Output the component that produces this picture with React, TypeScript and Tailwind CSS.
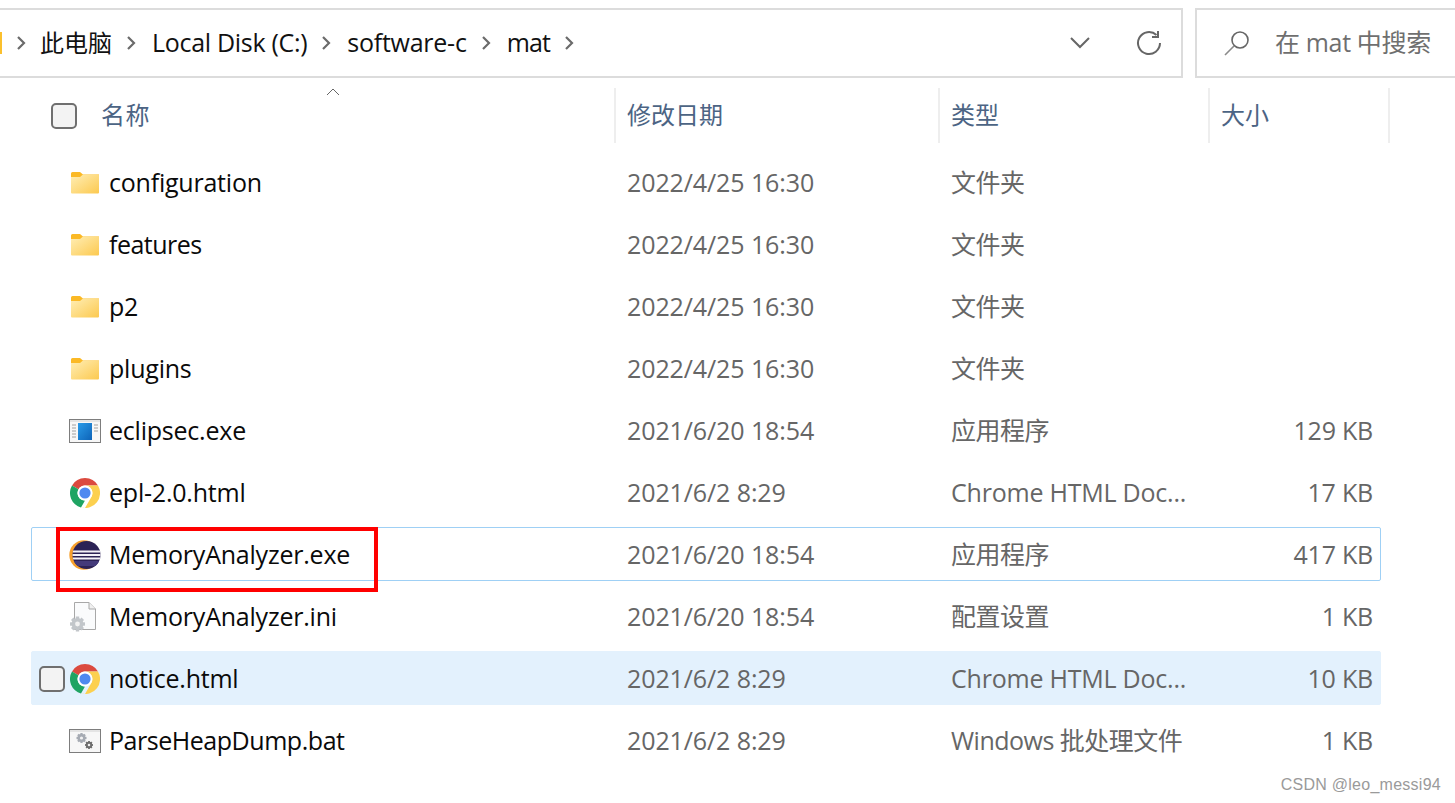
import React from "react";

const font = { fontFamily: '"Open Sans", "Noto Sans CJK SC", sans-serif' };

function Folder() {
  return (
    <svg width="30" height="24" viewBox="0 0 30 24">
      <defs>
        <linearGradient id="fg" x1="0" y1="0" x2="1" y2="1">
          <stop offset="0" stopColor="#ffeeb5" />
          <stop offset="1" stopColor="#fcc94f" />
        </linearGradient>
      </defs>
      <path d="M1 2.5 Q1 1 2.5 1 H10 L13 3.5 H29 V6 H1 Z" fill="#fbb925" />
      <path d="M1 6 L10 6 L13 3.5 H28 Q29 3.5 29 4.5 V21.5 Q29 22.5 28 22.5 H2 Q1 22.5 1 21.5 Z" fill="url(#fg)" />
    </svg>
  );
}

function Chrome() {
  return (
    <svg width="30" height="30" viewBox="0 0 30 30">
      <path d="M15 0 A15 15 0 0 1 28 7.5 L15 7.5 A7.5 7.5 0 0 0 8.5 11.2 L2 7.5 A15 15 0 0 1 15 0 Z" fill="#db4a3f" />
      <path d="M2 7.5 L8.5 11.2 A7.5 7.5 0 0 0 15 22.5 L11 29.5 A15 15 0 0 1 2 7.5 Z" fill="#1fa463" />
      <path d="M28 7.5 A15 15 0 0 1 11 29.5 L15 30 L21.5 18.7 A7.5 7.5 0 0 0 15 7.5 Z" fill="#fcd04f" />
      <circle cx="15" cy="15" r="7.4" fill="#fff" />
      <circle cx="15" cy="15" r="5.6" fill="#4f89f0" />
    </svg>
  );
}

function Exe() {
  return (
    <svg width="32" height="24" viewBox="0 0 32 24">
      <defs>
        <linearGradient id="bl" x1="0" y1="0" x2="1" y2="1">
          <stop offset="0" stopColor="#2a9be8" />
          <stop offset="1" stopColor="#0d63b8" />
        </linearGradient>
      </defs>
      <rect x="0.5" y="0.5" width="31" height="23" fill="#f7f7f7" stroke="#7d7d7d" />
      <rect x="1" y="1" width="30" height="2" fill="#e4e4e4" />
      <path d="M3 6h4M3 9h4M3 12h4M3 15h4M3 18h4M25 6h4M25 9h4M25 12h4" stroke="#a0a0a0" strokeWidth="1" />
      <rect x="9" y="4" width="14" height="17" fill="url(#bl)" />
    </svg>
  );
}

function Eclipse() {
  return (
    <svg width="32" height="30" viewBox="0 0 32 30">
      <defs>
        <clipPath id="ec">
          <circle cx="17.5" cy="15" r="14" />
        </clipPath>
      </defs>
      <circle cx="15" cy="15" r="14.7" fill="#f7a02d" />
      <circle cx="17.5" cy="15" r="14" fill="#2c2255" />
      <g clipPath="url(#ec)">
        <rect x="0" y="10.5" width="32" height="2" fill="#f3f1f8" />
        <rect x="0" y="14" width="32" height="2" fill="#f3f1f8" />
        <rect x="0" y="17.5" width="32" height="2" fill="#f3f1f8" />
        <rect x="0" y="21" width="32" height="5" fill="#443a7a" />
      </g>
    </svg>
  );
}

function Gear({ x, y, r, c }: { x: number; y: number; r: number; c: string }) {
  const teeth = [0, 45, 90, 135];
  return (
    <g>
      {teeth.map((a) => (
        <rect key={a} x={x - r * 0.28} y={y - r * 1.25} width={r * 0.56} height={r * 2.5} fill={c} transform={`rotate(${a} ${x} ${y})`} />
      ))}
      <circle cx={x} cy={y} r={r} fill={c} />
      <circle cx={x} cy={y} r={r * 0.4} fill="#f2f2f2" />
    </g>
  );
}

function Ini() {
  return (
    <svg width="30" height="32" viewBox="0 0 30 32">
      <path d="M4.5 1.5 H19 L25.5 8 V28.5 H4.5 Z" fill="#fafbfc" stroke="#a8a8a8" />
      <path d="M19 1.5 V8 H25.5" fill="#f0f0f0" stroke="#a8a8a8" />
      <Gear x={7.5} y={23} r={6} c="#c2c6ca" />
    </svg>
  );
}

function Bat() {
  return (
    <svg width="32" height="24" viewBox="0 0 32 24">
      <rect x="0.5" y="0.5" width="31" height="23" fill="#f7f7f7" stroke="#7d7d7d" />
      <rect x="1" y="1" width="30" height="2" fill="#e4e4e4" />
      <Gear x={12.5} y={9} r={4} c="#a6abb3" />
      <Gear x={20} y={16} r={3.2} c="#6e6e6e" />
    </svg>
  );
}

function Checkbox() {
  return <div className="h-[26px] w-[26px] rounded-[5px] border-2 border-[#6f6f6f] bg-[#f3f3f3]" />;
}

function Sep({ first }: { first?: boolean }) {
  return (
    <svg width="10" height="16" viewBox="0 0 10 16" className={`ml-[14px] shrink-0 ${first ? "mr-[14px]" : "mr-[16px]"}`}>
      <path d="M2 2 L8 8 L2 14" fill="none" stroke="#6b6b6b" strokeWidth="2.2" />
    </svg>
  );
}

const rows = [
  { n: "configuration", d: "2022/4/25 16:30", t: "文件夹", s: "", i: <Folder /> },
  { n: "features", d: "2022/4/25 16:30", t: "文件夹", s: "", i: <Folder />, nc: "tracking-[-0.5px]" },
  { n: "p2", d: "2022/4/25 16:30", t: "文件夹", s: "", i: <Folder /> },
  { n: "plugins", d: "2022/4/25 16:30", t: "文件夹", s: "", i: <Folder /> },
  { n: "eclipsec.exe", d: "2021/6/20 18:54", t: "应用程序", s: "129 KB", i: <Exe /> },
  { n: "epl-2.0.html", d: "2021/6/2 8:29", t: "Chrome HTML Doc...", s: "17 KB", i: <Chrome />, latin: true },
  { n: "MemoryAnalyzer.exe", d: "2021/6/20 18:54", t: "应用程序", s: "417 KB", i: <Eclipse />, focus: true },
  { n: "MemoryAnalyzer.ini", d: "2021/6/20 18:54", t: "配置设置", s: "1 KB", i: <Ini /> },
  { n: "notice.html", d: "2021/6/2 8:29", t: "Chrome HTML Doc...", s: "10 KB", i: <Chrome />, hover: true, latin: true },
  { n: "ParseHeapDump.bat", d: "2021/6/2 8:29", t: "Windows 批处理文件", s: "1 KB", i: <Bat />, nc: "tracking-[-0.46px]" },
];

export default function App() {
  return (
    <div className="relative h-[803px] w-[1455px] overflow-hidden bg-white" style={font}>
      {/* top bar */}
      <div className="mt-[8px] flex h-[69px] gap-[12px]">
        <div className="ml-[-4px] flex h-[70px] w-[1187px] items-center border-2 border-[#dcdcdc] pl-[2px]">
          <div className="h-[22px] w-[2px] shrink-0 bg-[#fbc02d]" />
          <Sep first />
          <span className="text-[24px] leading-none text-[#111]">此电脑</span>
          <Sep />
          <span className="text-[25px] tracking-[-0.3px] whitespace-nowrap text-[#111]">Local Disk (C:)</span>
          <Sep />
          <span className="text-[25px] tracking-[-0.25px] text-[#111]">software-c</span>
          <Sep />
          <span className="text-[25px] tracking-[-0.9px] text-[#111]">mat</span>
          <Sep />
          <div className="ml-auto mr-[19px] flex items-center gap-[45px]">
            <svg width="22" height="14" viewBox="0 0 22 14">
              <path d="M2 2 L11 11 L20 2" fill="none" stroke="#666" strokeWidth="2" />
            </svg>
            <svg width="26" height="26" viewBox="0 0 26 26">
              <path d="M20.5 5 A11 11 0 1 0 24 13" fill="none" stroke="#666" strokeWidth="2" />
              <path d="M22 1 V7 H16" fill="none" stroke="#666" strokeWidth="2" />
            </svg>
          </div>
        </div>
        <div className="flex h-[70px] flex-1 items-center border-2 border-r-0 border-[#dcdcdc] pl-[26px]">
          <svg width="28" height="26" viewBox="0 0 28 26">
            <circle cx="17" cy="10" r="8" fill="none" stroke="#666" strokeWidth="1.6" />
            <path d="M11 16 L2 25" fill="none" stroke="#8a8a8a" strokeWidth="1.6" />
          </svg>
          <span className="ml-[24px] text-[25px] tracking-[-0.35px] whitespace-nowrap text-[#6f6f6f]">在 mat 中搜索</span>
        </div>
      </div>

      {/* header */}
      <div className="mt-[11px] ml-[31px] flex h-[55px] items-center text-[24px] text-[#4c6484]">
        <div className="relative flex h-full w-[583px] items-center pl-[20px]">
          <Checkbox />
          <span className="mb-[2px] ml-[24px] tracking-[0.4px]">名称</span>
          <svg width="14" height="8" viewBox="0 0 14 8" className="absolute left-[295px] top-0">
            <path d="M1 7 L7 1 L13 7" fill="none" stroke="#666" strokeWidth="1" />
          </svg>
        </div>
        <div className="flex h-full w-[324px] items-center border-l-2 border-[#eeeeee] pb-[2px] pl-[11px]">修改日期</div>
        <div className="flex h-full w-[270px] items-center border-l-2 border-[#eeeeee] pb-[2px] pl-[11px]">类型</div>
        <div className="flex h-full w-[182px] items-center border-x-2 border-[#eeeeee] pb-[2px] pl-[11px]">大小</div>
      </div>

      {/* rows */}
      <div className="mt-[12px] ml-[31px] flex w-[1350px] flex-col gap-[8px]">
        {rows.map((r) => (
          <div
            key={r.n}
            className={`flex h-[54px] items-center rounded-[2px] border pt-[2px] text-[25px] tracking-[-0.22px] ${
              r.focus ? "border-[#9fd0f5]" : r.hover ? "border-[#e3f1fd] bg-[#e3f1fd]" : "border-transparent"
            }`}
          >
            <div className="flex w-[36px] shrink-0 pl-[7px]">{r.hover && <Checkbox />}</div>
            <div className="w-[41px] shrink-0">
              <div className="flex w-[34px] justify-center">{r.i}</div>
            </div>
            <div className={`w-[518px] shrink-0 text-[#0a0a0a] ${r.nc ?? ""}`}>{r.n}</div>
            <div className="w-[324px] shrink-0 tracking-[-0.1px] text-[#666]">{r.d}</div>
            <div className={`w-[270px] shrink-0 whitespace-nowrap text-[#666] ${r.latin ? "" : "tracking-[-0.5px]"}`}>{r.t}</div>
            <div className="w-[152px] shrink-0 text-right text-[#666]">{r.s}</div>
          </div>
        ))}
      </div>

      {/* annotation */}
      <div className="absolute left-[56px] top-[527px] h-[65px] w-[322px] border-[4px] border-[#ff0000]" />
      <div
        className="absolute right-[14px] top-[775px] text-[16px] leading-[20px] tracking-[0.26px] text-[#9a9a9a]"
        style={{ fontFamily: '"Liberation Sans", sans-serif' }}
      >
        CSDN @leo_messi94
      </div>
    </div>
  );
}
